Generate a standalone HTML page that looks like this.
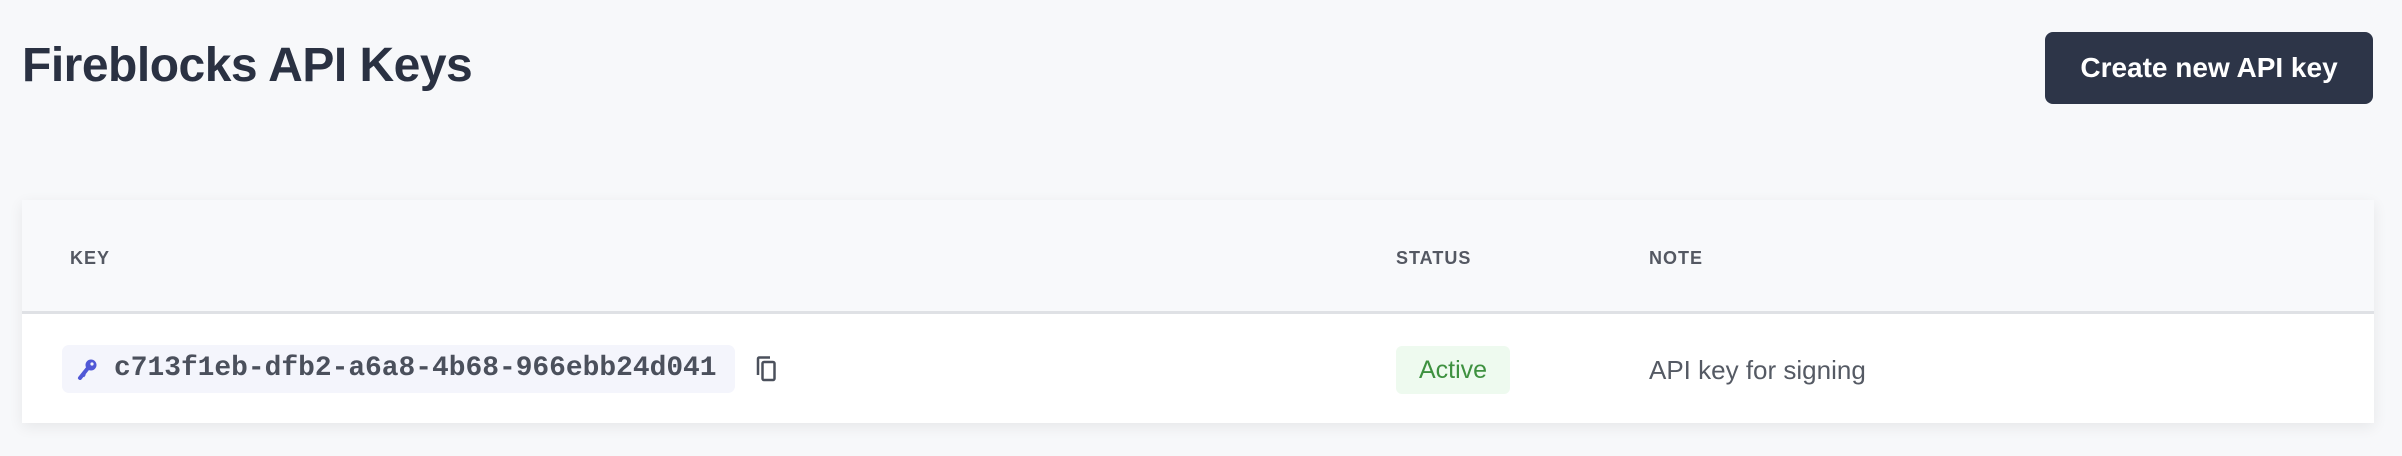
<!DOCTYPE html>
<html><head><style>
body{margin:0;width:2402px;height:456px;background:#f7f8fa;font-family:"Liberation Sans",sans-serif;position:relative;overflow:hidden}
.a{position:absolute}
h1{position:absolute;left:22px;top:38px;margin:0;font-size:48px;font-weight:bold;color:#2a3142;letter-spacing:-0.5px}
.btn{left:2045px;top:32px;width:328px;height:72px;background:#2d3548;border-radius:8px;color:#fff;font-weight:bold;font-size:28px;display:flex;align-items:center;justify-content:center}
.card{left:22px;top:200px;width:2352px;height:223px;background:#fff;box-shadow:0 4px 14px rgba(0,0,0,0.07)}
.hd{left:0;top:0;width:2352px;height:111px;background:#f8f9fb;border-bottom:3px solid #dfe1e5}
.th{font-size:18px;font-weight:bold;color:#545862;letter-spacing:1px;top:48px}
.pill{left:40px;top:145px;width:673px;height:48px;background:#f4f5fc;border-radius:7px}
.mono{left:92px;top:153px;font-family:"Liberation Mono",monospace;font-size:27.9px;font-weight:bold;color:#4b505c}
.badge{left:1374px;top:146px;width:114px;height:48px;background:#eefaef;border-radius:6px;color:#3e9140;font-size:25px;display:flex;align-items:center;justify-content:center}
.note{left:1627px;top:155px;font-size:26px;color:#555a64}
</style></head><body>
<h1>Fireblocks API Keys</h1>
<div class="a btn">Create new API key</div>
<div class="a card">
 <div class="a hd"></div>
 <div class="a th" style="left:48px">KEY</div>
 <div class="a th" style="left:1374px">STATUS</div>
 <div class="a th" style="left:1627px">NOTE</div>
 <div class="a pill"></div>
 <svg class="a" style="left:54px;top:159px" width="24" height="21" viewBox="0 0 24 21"><circle cx="15" cy="6" r="5.5" fill="#5058d6"/><path d="M12 9 L4 19" stroke="#5058d6" stroke-width="4" stroke-linecap="round"/><path d="M6 15 L9 17" stroke="#5058d6" stroke-width="3"/><circle cx="16" cy="5" r="1.6" fill="#f4f5fc"/></svg>
 <div class="a mono">c713f1eb-dfb2-a6a8-4b68-966ebb24d041</div>
 <svg class="a" style="left:733px;top:156px" width="23" height="26" viewBox="0 0 23 26"><path d="M3 19 V3 Q3 1.5 4.5 1.5 H15" fill="none" stroke="#4b505c" stroke-width="2.5"/><rect x="7.5" y="6" width="12" height="18" rx="1.5" fill="none" stroke="#4b505c" stroke-width="2.5"/></svg>
 <div class="a badge">Active</div>
 <div class="a note">API key for signing</div>
</div>
</body></html>
